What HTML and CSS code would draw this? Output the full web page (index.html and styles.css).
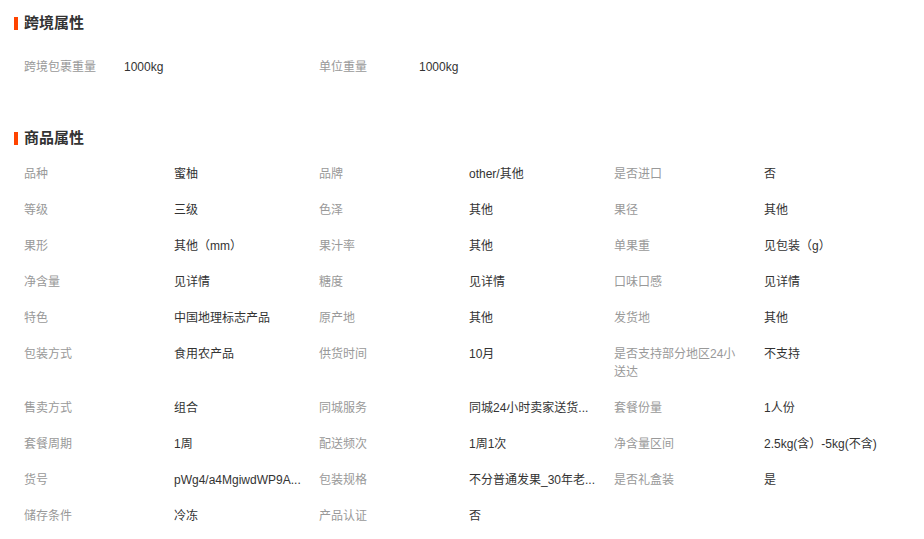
FILE: index.html
```html
<!DOCTYPE html>
<html lang="zh-CN">
<head>
<meta charset="utf-8">
<title>商品属性</title>
<link rel="stylesheet" href="styles.css">
</head>
<body>
<div class="page">
  <section class="section section-cross">
    <h2 class="title">跨境属性</h2>
    <div class="grid grid-cross">
      <div class="cell"><span class="label">跨境包裹重量</span><span class="value">1000kg</span></div>
      <div class="cell"><span class="label">单位重量</span><span class="value">1000kg</span></div>
    </div>
  </section>
  <section class="section section-product">
    <h2 class="title">商品属性</h2>
    <div class="grid grid-product">
      <div class="cell"><span class="label">品种</span><span class="value">蜜柚</span></div>
      <div class="cell"><span class="label">品牌</span><span class="value">other/其他</span></div>
      <div class="cell"><span class="label">是否进口</span><span class="value">否</span></div>

      <div class="cell"><span class="label">等级</span><span class="value">三级</span></div>
      <div class="cell"><span class="label">色泽</span><span class="value">其他</span></div>
      <div class="cell"><span class="label">果径</span><span class="value">其他</span></div>

      <div class="cell"><span class="label">果形</span><span class="value">其他（mm）</span></div>
      <div class="cell"><span class="label">果汁率</span><span class="value">其他</span></div>
      <div class="cell"><span class="label">单果重</span><span class="value">见包装（g）</span></div>

      <div class="cell"><span class="label">净含量</span><span class="value">见详情</span></div>
      <div class="cell"><span class="label">糖度</span><span class="value">见详情</span></div>
      <div class="cell"><span class="label">口味口感</span><span class="value">见详情</span></div>

      <div class="cell"><span class="label">特色</span><span class="value">中国地理标志产品</span></div>
      <div class="cell"><span class="label">原产地</span><span class="value">其他</span></div>
      <div class="cell"><span class="label">发货地</span><span class="value">其他</span></div>

      <div class="cell"><span class="label">包装方式</span><span class="value">食用农产品</span></div>
      <div class="cell"><span class="label">供货时间</span><span class="value">10月</span></div>
      <div class="cell"><span class="label">是否支持部分地区24小送达</span><span class="value">不支持</span></div>

      <div class="cell"><span class="label">售卖方式</span><span class="value">组合</span></div>
      <div class="cell"><span class="label">同城服务</span><span class="value">同城24小时卖家送货...</span></div>
      <div class="cell"><span class="label">套餐份量</span><span class="value">1人份</span></div>

      <div class="cell"><span class="label">套餐周期</span><span class="value">1周</span></div>
      <div class="cell"><span class="label">配送频次</span><span class="value">1周1次</span></div>
      <div class="cell"><span class="label">净含量区间</span><span class="value">2.5kg(含）-5kg(不含)</span></div>

      <div class="cell"><span class="label">货号</span><span class="value">pWg4/a4MgiwdWP9A...</span></div>
      <div class="cell"><span class="label">包装规格</span><span class="value">不分普通发果_30年老...</span></div>
      <div class="cell"><span class="label">是否礼盒装</span><span class="value">是</span></div>

      <div class="cell"><span class="label">储存条件</span><span class="value">冷冻</span></div>
      <div class="cell"><span class="label">产品认证</span><span class="value">否</span></div>
    </div>
  </section>
</div>
</body>
</html>
```

FILE: styles.css
```css
* { box-sizing: border-box; }
html, body { margin: 0; padding: 0; background: #fff; }
body {
  font-family: "Liberation Sans", "Noto Sans CJK SC", sans-serif;
  font-size: 12px;
  color: #333;
}
.page {
  width: 924px;
  padding: 13px 0 0 14px;
}
.title {
  margin: 0;
  height: 20px;
  line-height: 20px;
  font-size: 15px;
  font-weight: bold;
  color: #333;
  display: flex;
  align-items: center;
  gap: 6px;
}
.title::before {
  content: "";
  width: 4px;
  height: 13px;
  background: #ff4400;
}
.grid {
  display: grid;
  padding-left: 10px;
}
.grid-cross {
  grid-template-columns: repeat(2, 295px);
  margin-top: 16px;
}
.grid-product {
  grid-template-columns: repeat(3, 295px);
  margin-top: 8px;
}
.section-product { margin-top: 43px; }
.cell {
  display: flex;
  align-items: flex-start;
  padding: 9px 0;
  line-height: 18px;
}
.label {
  color: #999;
  flex: 0 0 150px;
  padding-right: 20px;
}
.grid-cross .label { flex-basis: 100px; }
.value {
  color: #333;
  white-space: nowrap;
  overflow: hidden;
  padding-right: 20px;
  flex: 1 1 auto;
  min-width: 0;
}
```
